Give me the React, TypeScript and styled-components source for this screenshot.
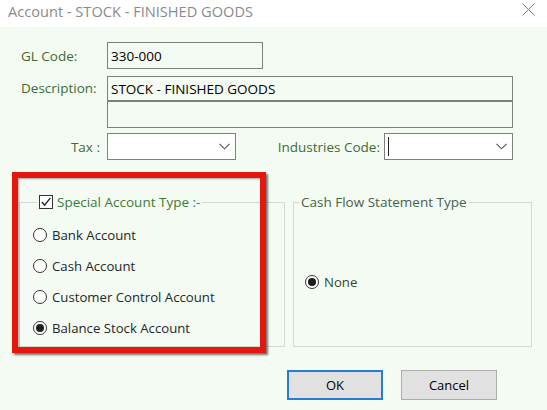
import React from 'react';
import styled, { createGlobalStyle } from 'styled-components';

const GlobalStyle = createGlobalStyle`
  html, body { margin: 0; padding: 0; background: #f4fbf2; }
  body { font-family: "Open Sans", "Noto Sans", sans-serif; }
  * { box-sizing: border-box; }
`;

const Window = styled.div`
  width: 547px;
  height: 410px;
  display: flex;
  flex-direction: column;
  background: #f4fbf2;
  overflow: hidden;
`;

const TitleBar = styled.div`
  height: 27px;
  flex: none;
  background: #ffffff;
  display: flex;
  align-items: flex-start;
  justify-content: space-between;
  padding: 0 12px 0 8px;
`;

const Title = styled.div`
  font-size: 14.6px;
  line-height: 20px;
  color: #8a8a8a;
  padding-top: 1px;
`;

const CloseIcon = styled.svg`
  width: 13px;
  height: 13px;
  margin-top: 3px;
`;

const Body = styled.div`
  flex: 1;
  padding: 15px 15px 0 19px;
  display: flex;
  flex-direction: column;
`;

const FormArea = styled.div`
  padding: 0 19px 0 2px;
  display: flex;
  flex-direction: column;
`;

const Row = styled.div<{ $mt?: number }>`
  display: flex;
  align-items: center;
  margin-top: ${(p) => p.$mt ?? 0}px;
`;

const DescGrid = styled.div`
  display: grid;
  grid-template-columns: 86px 1fr;
  margin-top: 7px;
`;

const Label = styled.label<{ $w?: number; $right?: boolean; $pr?: number; $lh?: number }>`
  flex: ${(p) => (p.$w ? 'none' : '1')};
  width: ${(p) => (p.$w ? `${p.$w}px` : 'auto')};
  text-align: ${(p) => (p.$right ? 'right' : 'left')};
  padding-right: ${(p) => p.$pr ?? 0}px;
  font-size: 13.5px;
  line-height: ${(p) => p.$lh ?? 18}px;
  color: #3c6b36;
  white-space: nowrap;
`;

const TextBox = styled.div<{ $w?: number; $h: number }>`
  width: ${(p) => (p.$w ? `${p.$w}px` : 'auto')};
  height: ${(p) => p.$h}px;
  border: 1px solid #7f7f7f;
  background: transparent;
  padding-left: 3px;
  font-size: 13.5px;
  color: #000;
  display: flex;
  align-items: center;
  white-space: nowrap;
  grid-column: 2;
`;

const Combo = styled.div`
  width: 129px;
  height: 27px;
  flex: none;
  border: 1px solid #7f7f7f;
  background: #ffffff;
  display: flex;
  align-items: center;
  justify-content: space-between;
  padding: 0 5px 0 3px;
`;

const Caret = styled.div`
  width: 1px;
  height: 19px;
  background: #222;
`;

const Chevron = styled.svg`
  width: 11px;
  height: 7px;
  margin-left: auto;
`;

const GroupRow = styled.div`
  display: flex;
  gap: 8px;
  margin-top: 33px;
`;

const LeftWrap = styled.div`
  position: relative;
  width: 266px;
  flex: none;
  display: flex;
`;

const Group = styled.fieldset<{ $pl: number }>`
  margin: 0;
  min-width: 0;
  height: 154px;
  border: 1px solid #d3d9d1;
  padding: 0 0 0 ${(p) => p.$pl}px;
  flex: 1;
`;

const Legend = styled.legend<{ $ml: number }>`
  margin-left: ${(p) => p.$ml}px;
  padding: 0 2px;
  font-size: 13.5px;
  line-height: 18px;
`;

const LegendInner = styled.span<{ $color: string }>`
  display: inline-flex;
  align-items: center;
  gap: 4px;
  color: ${(p) => p.$color};
`;

const CheckBox = styled.span`
  width: 14px;
  height: 14px;
  border: 1px solid #333;
  background: #fff;
  display: inline-flex;
  align-items: center;
  justify-content: center;
`;

const RadioList = styled.div<{ $mt: number }>`
  display: flex;
  flex-direction: column;
  margin-top: ${(p) => p.$mt}px;
`;

const RadioRow = styled.div<{ $color?: string }>`
  display: flex;
  align-items: center;
  height: 31px;
  gap: 5px;
  font-size: 13.2px;
  color: ${(p) => p.$color ?? '#262626'};
`;

const RadioCircle = styled.span<{ $checked?: boolean }>`
  width: 14px;
  height: 14px;
  border-radius: 50%;
  border: 1px solid #333;
  background: #fff;
  display: inline-flex;
  align-items: center;
  justify-content: center;
  flex: none;
  &::after {
    content: '';
    display: ${(p) => (p.$checked ? 'block' : 'none')};
    width: 8px;
    height: 8px;
    border-radius: 50%;
    background: #1c1c1c;
  }
`;

const Highlight = styled.div`
  position: absolute;
  left: -7px;
  top: -21px;
  width: 254px;
  height: 181px;
  border: 6px solid #e5160e;
  box-shadow: 2px 2px 2px rgba(0, 0, 0, 0.55), inset 1px 1px 2px rgba(0, 0, 0, 0.35);
  pointer-events: none;
`;

const ButtonRow = styled.div`
  display: flex;
  justify-content: flex-end;
  gap: 18px;
  margin-top: 23px;
  padding-right: 35px;
`;

const Button = styled.button<{ $default?: boolean }>`
  width: 96px;
  height: 30px;
  background: #e1e1e1;
  border: 1px solid ${(p) => (p.$default ? '#2a7bd3' : '#adadad')};
  box-shadow: ${(p) => (p.$default ? 'inset 0 0 0 1px #2a7bd3' : 'none')};
  font-family: inherit;
  font-size: 13px;
  color: #000;
  padding: 0;
`;

const ChevronIcon = () => (
  <Chevron viewBox="0 0 11 7">
    <path d="M0.5 0.8 L5.5 5.8 L10.5 0.8" fill="none" stroke="#555" strokeWidth="1.1" />
  </Chevron>
);

const radios = ['Bank Account', 'Cash Account', 'Customer Control Account', 'Balance Stock Account'];

export default function App() {
  return (
    <>
      <GlobalStyle />
      <Window>
        <TitleBar>
          <Title>Account - STOCK - FINISHED GOODS</Title>
          <CloseIcon viewBox="0 0 13 13">
            <path d="M0.5 0.5 L12.5 12.5 M12.5 0.5 L0.5 12.5" stroke="#7a7a7a" strokeWidth="1" fill="none" />
          </CloseIcon>
        </TitleBar>
        <Body>
          <FormArea>
            <Row>
              <Label $w={86}>GL Code:</Label>
              <TextBox $w={156} $h={27}>330-000</TextBox>
            </Row>
            <DescGrid>
              <Label $w={86} $lh={25}>Description:</Label>
              <TextBox $h={25}>STOCK - FINISHED GOODS</TextBox>
              <TextBox $h={27} />
            </DescGrid>
            <Row $mt={5}>
              <Label $w={86} $right $pr={7}>Tax :</Label>
              <Combo>
                <ChevronIcon />
              </Combo>
              <Label $right $pr={4}>Industries Code:</Label>
              <Combo>
                <Caret />
                <ChevronIcon />
              </Combo>
            </Row>
          </FormArea>
          <GroupRow>
            <LeftWrap>
              <Group $pl={13}>
                <Legend $ml={4}>
                  <LegendInner $color="#3f7a38">
                    <CheckBox>
                      <svg width="12" height="12" viewBox="0 0 12 12">
                        <path d="M1.8 6 L4.6 9.2 L10.4 1.8" fill="none" stroke="#222" strokeWidth="1.3" />
                      </svg>
                    </CheckBox>
                    Special Account Type :-
                  </LegendInner>
                </Legend>
                <RadioList $mt={7}>
                  {radios.map((r, i) => (
                    <RadioRow key={r}>
                      <RadioCircle $checked={i === 3} />
                      {r}
                    </RadioRow>
                  ))}
                </RadioList>
              </Group>
              <Highlight />
            </LeftWrap>
            <Group $pl={11}>
              <Legend $ml={-6}>
                <LegendInner $color="#46624a">Cash Flow Statement Type</LegendInner>
              </Legend>
              <RadioList $mt={55}>
                <RadioRow $color="#2f4a30">
                  <RadioCircle $checked />
                  None
                </RadioRow>
              </RadioList>
            </Group>
          </GroupRow>
          <ButtonRow>
            <Button $default>OK</Button>
            <Button>Cancel</Button>
          </ButtonRow>
        </Body>
      </Window>
    </>
  );
}
